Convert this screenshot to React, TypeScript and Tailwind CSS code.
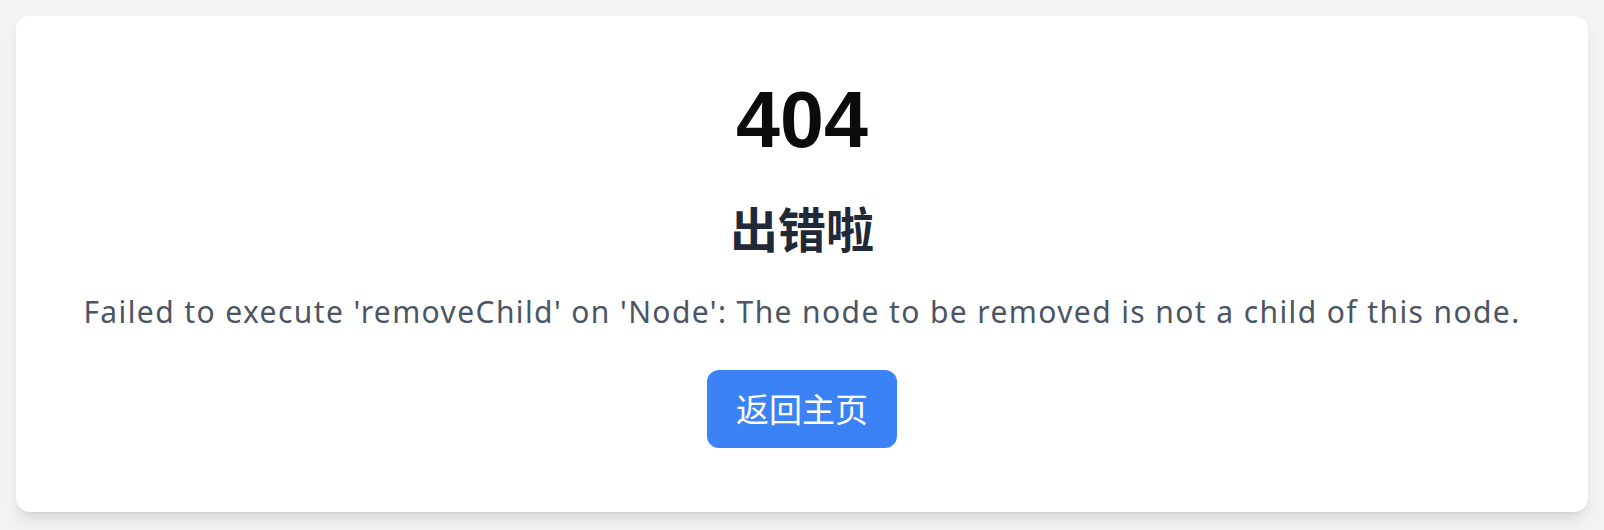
export default function App() {
  return (
    <div className="min-h-[530px] bg-[#f1f3f5] p-4">
      <div className="flex h-[496px] flex-col items-center rounded-[14px] bg-white pt-[64px] shadow-lg">
        <h1 className="font-['Liberation_Sans',Arial,sans-serif] text-[79px] font-bold leading-none text-[#0b0b0b]">
          404
        </h1>
        <h2 className="mt-[44px] font-['Noto_Sans_CJK_SC',sans-serif] text-[48px] font-bold leading-none text-[#1f2937]">
          出错啦
        </h2>
        <p className="mt-[46px] font-['Noto_Sans','Noto_Sans_CJK_SC',sans-serif] text-[30px] leading-none tracking-[1.4px] text-[#4b5563]">
          Failed to execute 'removeChild' on 'Node': The node to be removed is not a child of this node.
        </p>
        <button
          type="button"
          className="mt-[43px] flex h-[78px] items-center rounded-[12px] bg-[#3b82f6] px-[29px] font-['Noto_Sans_CJK_SC',sans-serif] text-[33px] text-white"
        >
          返回主页
        </button>
      </div>
    </div>
  );
}
